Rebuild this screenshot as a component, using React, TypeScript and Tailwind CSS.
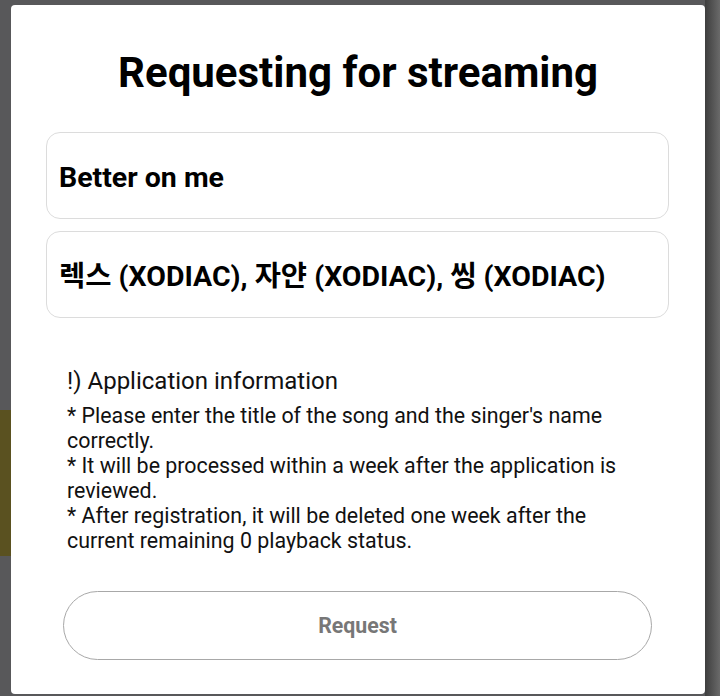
import React from "react";

const notes = [
  "* Please enter the title of the song and the singer's name correctly.",
  "* It will be processed within a week after the application is reviewed.",
  "* After registration, it will be deleted one week after the current remaining 0 playback status.",
];

function Field({ value }: { value: string }) {
  return (
    <div className="flex h-[87px] items-center rounded-[14px] border border-[#dcdcdc] bg-white pl-3 pt-[5px]">
      <span className="text-[28.5px] font-bold text-black">{value}</span>
    </div>
  );
}

export default function App() {
  return (
    <div
      className="relative h-[696px] w-[720px] overflow-hidden bg-[#58585a]"
      style={{ fontFamily: "Roboto, 'Noto Sans CJK KR', sans-serif" }}
    >
      {/* page content peeking behind the dim overlay */}
      <div className="absolute left-0 top-[410px] h-[146px] w-[12px] bg-[#5a5120]" />
      <div className="absolute right-0 top-0 h-full w-[15px] bg-gradient-to-r from-[#3e3e3e] to-[#6a6a6a]" />

      <div className="relative ml-[11px] mt-[5px] flex h-[689px] w-[694px] flex-col rounded-[4px] bg-white">
        <h1 className="mt-[44px] text-center text-[42px] font-bold leading-[47px] text-black">
          Requesting for streaming
        </h1>

        <div className="ml-[35px] mr-[36px] mt-[36px] flex flex-col gap-3">
          <Field value="Better on me" />
          <Field value="렉스 (XODIAC), 자얀 (XODIAC), 씽 (XODIAC)" />
        </div>

        <div className="ml-[56px] mt-[49px] w-[575px] text-[#111]">
          <p className="text-[24px] leading-[28px]">!) Application information</p>
          <div className="mt-[8px] flex flex-col text-[21.4px] leading-[25px]">
            {notes.map((n) => (
              <p key={n}>{n}</p>
            ))}
          </div>
        </div>

        <button className="ml-[52px] mr-[53px] mt-[38px] h-[69px] rounded-full border border-[#a8a8a8] bg-white text-[21.3px] font-bold text-[#777]">
          Request
        </button>
      </div>
    </div>
  );
}
